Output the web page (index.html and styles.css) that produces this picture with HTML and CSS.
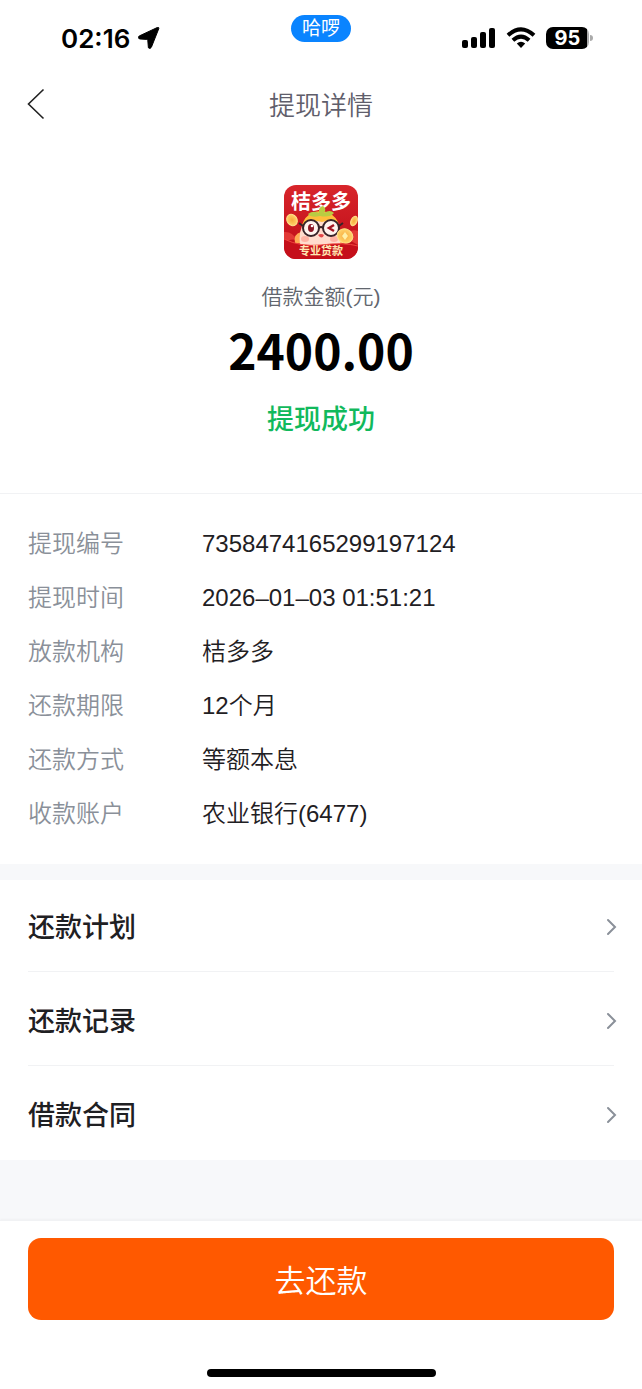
FILE: index.html
```html
<!DOCTYPE html>
<html lang="zh-CN">
<head>
    <meta charset="UTF-8" />
    <meta name="viewport" content="width=device-width, initial-scale=1" />
    <title>提现详情</title>
    <link rel="stylesheet" href="styles.css">
</head>
<body>

<div class="status-bar">
    <div class="status-left">
        <span class="time">02:16</span>
        <svg width="22" height="22" viewBox="0 0 22 22" aria-hidden="true">
            <path d="M20.8 1.6 L13.4 20.2 Q12.2 22.4 10.4 20.8 L9.8 13.4 Q9.7 12.500 8.8 12.400 L1.4 11.9 Q-0.8 10.800 1.2 9 L19.3 0.5 Q21.2 0 20.8 1.6 Z" stroke="#000" stroke-width="1" />
        </svg>
    </div>
    <span class="island">哈啰</span>
    <div class="status-right">
        <svg width="34" height="22" viewBox="0 0 34 22" aria-hidden="true">
            <rect x="0" y="13" width="6" height="8" rx="2" />
            <rect x="9" y="10" width="6" height="11" rx="2" />
            <rect x="18" y="5" width="6" height="16" rx="2" />
            <rect x="27" y="1" width="6" height="20" rx="2" />
        </svg>
        <svg width="30" height="22" viewBox="0 0 30 22" fill="none" stroke="#000" stroke-width="4" aria-hidden="true">
            <path d="M2 8.3 Q15 -3.6 28 8.3" />
            <path d="M6.9 13.3 Q15 6 23.1 13.3" />
            <path d="M10.8 16.6 Q15 13 19.2 16.6 L15 21 Z" fill="#000" stroke="none" />
        </svg>
        <span class="battery">95</span>
    </div>
</div>

<header class="nav">
    <button class="back" aria-label="返回">
        <svg width="18" height="32" viewBox="0 0 18 32" fill="none" stroke="#222" stroke-width="1.6">
            <path d="M16.5 1.5 L1.5 16 L16.5 30.5" />
        </svg>
    </button>
    <h1>提现详情</h1>
</header>

<main>
    <section class="summary">
        <svg class="logo" viewBox="0 0 74 74" role="img" aria-label="桔多多">
            <defs>
                <linearGradient id="red" x1="0" y1="0" x2="0" y2="1">
                    <stop offset="0" stop-color="#d8252b" />
                    <stop offset="1" stop-color="#bd0c16" />
                </linearGradient>
                <radialGradient id="coin">
                    <stop offset="0" stop-color="#f7ab3e" />
                    <stop offset="1" stop-color="#ffd36b" />
                </radialGradient>
                <clipPath id="tile"><rect width="74" height="74" rx="12" /></clipPath>
            </defs>
            <g clip-path="url(#tile)">
                <rect width="74" height="74" fill="url(#red)" />
                <path d="M0 47 Q8 46 13 55 Q6 53 0 58 Z M74 46 Q66 43 60 52 L74 60 Z" fill="#e23a36" />
                <text class="logo-name" x="37" y="24" text-anchor="middle">桔多多</text>
                <!-- mascot -->
                <path d="M11 58 Q9 49 17 47 L22 59 Z M54 47 Q60 49 59 58 L52 60 Z" fill="#ffab55" />
                <path d="M16 61 Q14 45 21 36 Q36 23 52 36 Q58 46 56 61 Z" fill="#ffdccd" />
                <path d="M18 40 Q21 31 28 28 Q37 24 45 28 Q53 32 55 40 Q47 34 38 37 Q28 34 18 40 Z" fill="#ffbd3c" />
                <path d="M36 31 Q27 33 24 29 Q29 25 35 28 Q34 22 39 21 Q43 24 40 28 Q46 24 50 28 Q46 33 36 31 Z" fill="#b9cc42" />
                <ellipse cx="21" cy="54" rx="4" ry="3" fill="#ffb3a4" />
                <ellipse cx="50" cy="54" rx="4" ry="3" fill="#ffb3a4" />
                <g fill="#fff4ef" stroke="#392429" stroke-width="2">
                    <circle cx="27" cy="43" r="8" />
                    <circle cx="47" cy="43" r="8" />
                    <path d="M35 43 Q37 41 39 43 M19 41 L15 38 M55 41 L59 38" fill="none" />
                </g>
                <ellipse cx="27" cy="43" rx="3" ry="4" fill="#8d1725" />
                <circle cx="28" cy="41" r="1.300" fill="#fff" />
                <path d="M50 40 L45 43 L50 46" fill="none" stroke="#a31522" stroke-width="2.500" />
                <path d="M34 50 Q37 48 40 50 Q38 55 34 50 Z" fill="#e4484a" />
                <!-- coins -->
                <g fill="url(#coin)" stroke="#ffe08a" stroke-width="1">
                    <ellipse cx="8" cy="35" rx="5" ry="6" transform="rotate(-35 8 35)" />
                    <ellipse cx="70" cy="36" rx="3" ry="5" transform="rotate(25 70 36)" />
                    <ellipse cx="61" cy="51" rx="8" ry="7" transform="rotate(25 61 51)" />
                </g>
                <path d="M61 47 L64 51 L61 55 L58 51 Z" fill="#fff0a8" />
                <path d="M0 54 Q16 62 37 60 Q60 57 74 61 V74 H0 Z" fill="#c50f1a" />
                <path d="M0 54 Q16 62 37 60 Q60 57 74 61" fill="none" stroke="#ef463e" stroke-width="1" />
                <text class="logo-tag" x="37" y="70" text-anchor="middle">专业贷款</text>
            </g>
        </svg>
        <p class="amount-label">借款金额(元)</p>
        <p class="amount">2400.00</p>
        <p class="result">提现成功</p>
    </section>

    <dl class="details">
        <div class="detail"><dt>提现编号</dt><dd>7358474165299197124</dd></div>
        <div class="detail"><dt>提现时间</dt><dd>2026–01–03 01:51:21</dd></div>
        <div class="detail"><dt>放款机构</dt><dd>桔多多</dd></div>
        <div class="detail"><dt>还款期限</dt><dd>12个月</dd></div>
        <div class="detail"><dt>还款方式</dt><dd>等额本息</dd></div>
        <div class="detail"><dt>收款账户</dt><dd>农业银行(6477)</dd></div>
    </dl>

    <nav class="links">
        <a href="#plan">还款计划
            <svg width="12" height="20" viewBox="0 0 12 20"><path d="M3 2 L10 9 L3 16" /></svg>
        </a>
        <a href="#records">还款记录
            <svg width="12" height="20" viewBox="0 0 12 20"><path d="M3 2 L10 9 L3 16" /></svg>
        </a>
        <a href="#contract">借款合同
            <svg width="12" height="20" viewBox="0 0 12 20"><path d="M3 2 L10 9 L3 16" /></svg>
        </a>
    </nav>
</main>

<footer class="bottom-bar">
    <button class="repay-btn">去还款</button>
    <div class="home-indicator"></div>
</footer>

</body>
</html>
```
FILE: styles.css
```css
* { box-sizing: border-box; }
body {
  margin: 0;
  font-family: 'Liberation Sans', 'Noto Sans CJK SC', sans-serif;
  background: #f7f8fa;
  min-height: 100vh;
  display: flex;
  flex-direction: column;
  color: #1f2023;
}
h1, p, dl, dd { margin: 0; }
button { font-family: inherit; border: none; cursor: pointer; }
svg { display: block; flex-shrink: 0; }

/* status bar */
.status-bar {
  display: grid;
  grid-template-columns: 1fr 60px 1fr;
  align-items: start;
  height: 72px;
  padding: 15px 49px 0;
  background: #fff;
}
.status-left, .status-right {
  display: flex;
  align-items: center;
  height: 46px;
}
.status-left { gap: 8px; padding-left: 12px; }
.status-right { justify-content: flex-end; gap: 10px; }
.time {
  font-family: Inter, sans-serif;
  font-size: 26px;
  font-weight: 600;
  color: #000;
}
.island {
  height: 27px;
  border-radius: 14px;
  background: #0a84ff;
  color: #fff;
  font-size: 19px;
  line-height: 27px;
  text-align: center;
}
.battery {
  position: relative;
  width: 43px;
  height: 22px;
  margin-right: 4px;
  border-radius: 7px;
  background: linear-gradient(to right, #000 41px, #aaa 41px);
  color: #fff;
  font-family: Inter, sans-serif;
  font-size: 20px;
  font-weight: 700;
  line-height: 22px;
  text-align: center;
}
.battery::after {
  content: '';
  position: absolute;
  top: 8px;
  right: -4px;
  width: 3px;
  height: 6px;
  border-radius: 0 3px 3px 0;
  background: #aaa;
}

/* title bar */
.nav {
  display: grid;
  grid-template-columns: 60px 1fr 60px;
  align-items: center;
  height: 62px;
  background: #fff;
}
.nav h1 {
  grid-column: 2;
  font-size: 26px;
  font-weight: 350;
  text-align: center;
  color: #5f5e6b;
}
.back {
  padding: 2px 0 0 27px;
  background: none;
}

.summary {
  display: flex;
  flex-direction: column;
  align-items: center;
  padding: 51px 28px 55px;
  background: #fff;
  border-bottom: 1px solid #f1f2f4;
}
.logo { width: 74px; height: 74px; }
.logo-name { font-size: 20px; font-weight: 700; fill: #fff; }
.logo-tag { font-size: 11px; font-weight: 700; fill: #ffe9b5; }
.amount-label {
  margin-top: 22px;
  font-size: 21px;
  font-weight: 350;
  line-height: 32px;
  color: #62666e;
}
.amount {
  margin-top: 4px;
  font-family: 'Noto Sans CJK SC', sans-serif;
  font-size: 48px;
  font-weight: 700;
  line-height: 64px;
  color: #000;
}
.result {
  margin-top: 21px;
  font-size: 27px;
  font-weight: 500;
  line-height: 36px;
  color: #11b95c;
}

.details {
  display: flex;
  flex-direction: column;
  gap: 22px;
  padding: 34px 28px;
  background: #fff;
  font-size: 24px;
  font-weight: 350;
  line-height: 32px;
}
.detail { display: flex; }
.detail dt { width: 174px; color: #8a9099; }

.links {
  margin-top: 16px;
  padding: 0 28px;
  background: #fff;
}
.links a {
  display: flex;
  justify-content: space-between;
  align-items: center;
  padding: 32px 0 25px;
  border-bottom: 1px solid #f1f2f4;
  font-size: 27px;
  font-weight: 500;
  line-height: 36px;
  color: #1f2023;
  text-decoration: none;
}
.links a:first-child { padding-top: 30px; }
.links a:last-child { border-bottom-color: transparent; }
.links svg {
  margin-right: -3px;
  fill: none;
  stroke: #8a9099;
  stroke-width: 2;
  stroke-linecap: round;
}

.bottom-bar {
  margin-top: auto;
  padding: 17px 28px 12px;
  background: #fff;
  border-top: 1px solid #f1f2f4;
  box-shadow: 0 -1px 2px rgba(0,0,0,0.03);
}
.repay-btn {
  display: block;
  width: 100%;
  height: 82px;
  padding: 0 0 2px;
  border-radius: 13px;
  background: #ff5900;
  color: #fff;
  font-size: 31px;
  font-weight: 350;
}
.home-indicator {
  width: 229px;
  height: 8px;
  margin: 49px auto 0;
  border-radius: 4px;
  background: #000;
}
```
